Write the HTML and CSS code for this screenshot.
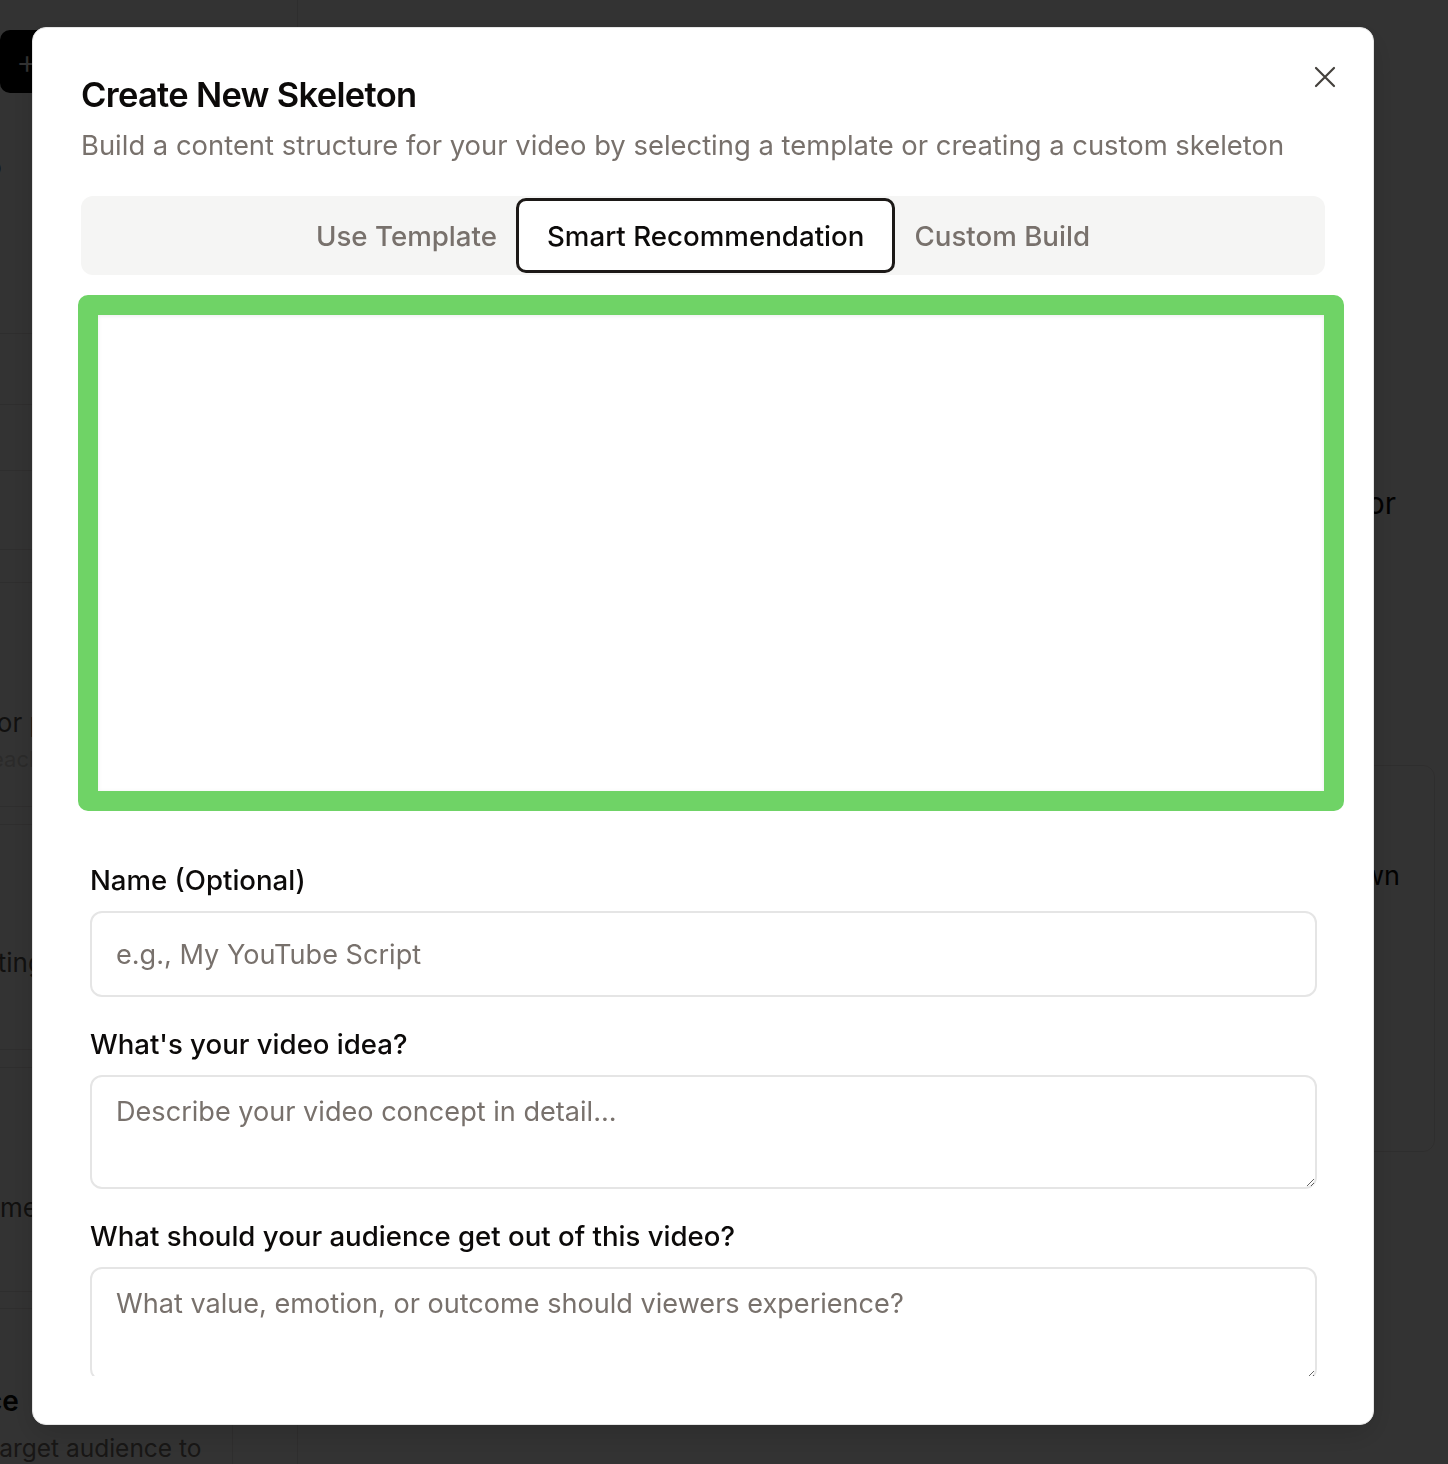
FILE: index.html
```html
<!DOCTYPE html>
<html lang="en">
<head>
<meta charset="utf-8">
<title>Create New Skeleton</title>
<link rel="stylesheet" href="styles.css">
</head>
<body>
<div class="page">
  <aside class="sidebar">
    <div class="new-btn"><span class="plus">+</span></div>
    <p class="frag frag-o">to</p>
    <p class="frag frag-dot">.</p>
    <div class="card card-a"></div>
    <div class="card card-b"></div>
    <div class="card card-c">
      <p class="frag frag-orp">for p</p>
      <p class="frag frag-ch">each</p>
    </div>
    <div class="card card-d">
      <p class="frag frag-ting">setting</p>
    </div>
    <div class="card card-e">
      <p class="frag frag-me">theme</p>
    </div>
    <div class="card card-f">
      <p class="frag frag-ce">Audience</p>
      <p class="frag frag-aud">target audience to</p>
    </div>
  </aside>
  <main class="main">
    <p class="main-heading">For</p>
    <div class="main-card">
      <p class="main-card-text">Breakdown</p>
    </div>
  </main>
</div>

<div class="overlay">
  <div class="modal" role="dialog" aria-labelledby="dlg-title">
    <button class="close" aria-label="Close">
      <svg width="24" height="24" viewBox="0 0 24 24" fill="none" stroke="currentColor" stroke-width="2.2" stroke-linecap="round"><path d="M3 3L21 21M21 3L3 21"/></svg>
    </button>
    <header class="modal-header">
      <h2 id="dlg-title" class="title">Create New Skeleton</h2>
      <p class="subtitle">Build a content structure for your video by selecting a template or creating a custom skeleton</p>
    </header>
    <div class="modal-body">
      <div class="tabs">
        <button class="tab">Use Template</button>
        <button class="tab tab-active">Smart Recommendation</button>
        <button class="tab">Custom Build</button>
      </div>
      <div class="highlight"></div>
      <form class="form">
        <div class="field">
          <label class="label" for="f-name">Name (Optional)</label>
          <input class="input" id="f-name" type="text" placeholder="e.g., My YouTube Script">
        </div>
        <div class="field">
          <label class="label" for="f-idea">What's your video idea?</label>
          <textarea class="input textarea" id="f-idea" placeholder="Describe your video concept in detail..."></textarea>
        </div>
        <div class="field">
          <label class="label" for="f-out">What should your audience get out of this video?</label>
          <textarea class="input textarea" id="f-out" placeholder="What value, emotion, or outcome should viewers experience?"></textarea>
        </div>
      </form>
    </div>
  </div>
</div>
</body>
</html>
```

FILE: styles.css
```css
* { box-sizing: border-box; }

html, body {
  margin: 0;
  padding: 0;
  height: 100%;
}

body {
  font-family: Inter, "Noto Sans", "Liberation Sans", sans-serif;
  background: #ffffff;
  color: #0c0a09;
  overflow: hidden;
}

/* ---------- background page ---------- */
.page {
  display: grid;
  grid-template-columns: 298px 1fr;
  height: 1464px;
}

.sidebar {
  border-right: 1px solid #e7e5e4;
  padding-top: 30px;
  overflow: hidden;
}

.new-btn {
  height: 63px;
  width: 260px;
  background: #000;
  border-radius: 10px;
  display: flex;
  align-items: center;
  padding-left: 16px;
}

.plus {
  color: #fff;
  font-size: 34px;
  font-weight: 300;
  line-height: 1;
}

.frag {
  margin: 0;
  font-size: 26px;
  color: #57534e;
  white-space: nowrap;
  line-height: 36px;
}

.frag-o { margin: 56px 0 0 -22px; }
.frag-dot { margin: 64px 0 0 -10px; }

.card {
  margin-left: -40px;
  width: 273px;
  border: 1px solid #e7e5e4;
  border-radius: 12px;
}

.card-a { margin-top: 48px; height: 72px; }
.card-b { margin-top: 65px; height: 80px; }
.card-c { margin-top: 32px; height: 225px; padding-top: 122px; }
.card-d { margin-top: 17px; height: 226px; padding-top: 120px; }
.card-e { margin-top: 17px; height: 225px; padding-top: 122px; }
.card-f { margin-top: 16px; height: 220px; padding-top: 74px; border-bottom: none; }

.frag-orp { margin-left: 27px; }
.frag-ch { margin-left: 30px; color: #d6d3d1; font-size: 22px; }
.frag-ting { margin-left: 0; }
.frag-me { margin-left: 0; }
.frag-ce { margin-left: -71px; color: #0c0a09; font-weight: 600; font-size: 28px; }
.frag-aud { margin: 11px 0 0 30px; color: #78716c; font-size: 24.5px; }

.main {
  padding-right: 13px;
  display: flex;
  flex-direction: column;
  align-items: flex-end;
}

.main-heading {
  margin: 481px 39px 0 0;
  font-size: 30px;
  line-height: 44px;
  color: #0c0a09;
}

.main-card {
  margin-top: 240px;
  width: 400px;
  height: 387px;
  border: 1px solid #e7e5e4;
  border-radius: 12px;
  padding: 92px 34px 0 0;
  text-align: right;
}

.main-card-text {
  margin: 0;
  font-size: 27px;
  line-height: 36px;
  color: #0c0a09;
}

/* ---------- overlay + modal ---------- */
.overlay {
  position: fixed;
  inset: 0;
  background: rgba(0, 0, 0, 0.8);
  display: flex;
  padding: 27px 74px 39px 32px;
}

.modal {
  position: relative;
  flex: 1;
  background: #fff;
  border: 1px solid #e5e5e5;
  border-radius: 14px;
  padding: 45px 48px 48px 48px;
  display: flex;
  flex-direction: column;
  box-shadow: 0 10px 30px rgba(0, 0, 0, 0.15);
}

.close {
  position: absolute;
  top: 35px;
  right: 34px;
  width: 28px;
  height: 28px;
  padding: 2px;
  border: 0;
  background: none;
  color: #44403c;
  display: flex;
  align-items: center;
  justify-content: center;
  cursor: pointer;
}

.modal-header {
  display: flex;
  flex-direction: column;
}

.title {
  margin: 0;
  font-size: 34.5px;
  line-height: 44px;
  font-weight: 600;
  letter-spacing: -0.7px;
  color: #0c0a09;
}

.subtitle {
  margin: 8px 0 0;
  font-size: 27.4px;
  line-height: 40px;
  color: #78716c;
}

.modal-body {
  flex: 1;
  overflow: hidden;
  margin: 31px -30px 0;
  padding: 0 30px;
}

.tabs {
  height: 79px;
  background: #f5f5f4;
  border-radius: 12px;
  padding: 2px;
  display: flex;
  justify-content: center;
}

.tab {
  font-family: inherit;
  font-size: 27.7px;
  font-weight: 500;
  color: #78716c;
  background: transparent;
  border: 3px solid transparent;
  border-radius: 10px;
  padding: 0 16px;
  cursor: pointer;
}

.tab-active {
  background: #fff;
  color: #0c0a09;
  border-color: #1c1917;
  padding: 0 28px;
}

.highlight {
  margin: 20px -19px 0 -3px;
  height: 516px;
  border: 20px solid #6fd366;
  border-radius: 10px;
  background: #fff;
  box-shadow: inset 0 1px 4px rgba(0, 0, 0, 0.08);
}

.form {
  padding: 49px 8px 0 9px;
  display: flex;
  flex-direction: column;
  gap: 27px;
}

.field {
  display: flex;
  flex-direction: column;
}

.label {
  font-size: 27.6px;
  line-height: 40px;
  font-weight: 500;
  color: #0c0a09;
  margin-bottom: 11px;
}

.input {
  font-family: inherit;
  font-size: 27.1px;
  color: #0c0a09;
  height: 86px;
  border: 2px solid #e5e5e5;
  border-radius: 12px;
  padding: 0 24px;
  background: #fff;
  outline: none;
}

.textarea {
  height: 114px;
  padding: 16px 24px;
  line-height: 38px;
  resize: vertical;
}

.input::placeholder {
  color: #78716c;
  opacity: 1;
}
```
